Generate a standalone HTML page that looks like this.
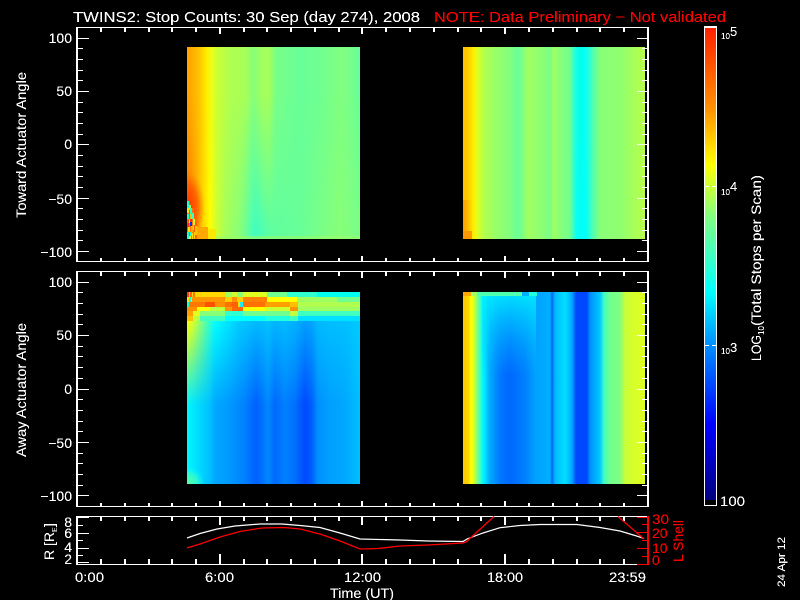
<!DOCTYPE html>
<html><head><meta charset="utf-8"><title>TWINS2 Stop Counts</title>
<style>html,body{margin:0;padding:0;background:#000}svg{display:block}
text{font-family:"Liberation Sans",sans-serif;fill:#fff;font-size:14px}
.r{fill:#f00}</style></head><body>
<svg width="800" height="600" viewBox="0 0 800 600" xmlns="http://www.w3.org/2000/svg">
<defs>
<filter id="al" filterUnits="userSpaceOnUse" x="0" y="0" width="800" height="600" color-interpolation-filters="sRGB"><feComponentTransfer><feFuncA type="linear" slope="2.6" intercept="-0.45"/></feComponentTransfer></filter>
<linearGradient id="cb" x1="0" y1="28" x2="0" y2="500" gradientUnits="userSpaceOnUse">
<stop offset="0" stop-color="#ff2000"/><stop offset=".17" stop-color="#ff9000"/><stop offset=".29" stop-color="#ffff00"/><stop offset=".4" stop-color="#80ff80"/><stop offset=".56" stop-color="#00ffff"/><stop offset=".67" stop-color="#0090ff"/><stop offset=".84" stop-color="#0000ff"/><stop offset="1" stop-color="#000080"/></linearGradient>
<linearGradient id="p1a" x1="0" x2="1000" gradientUnits="userSpaceOnUse"><stop offset=".187" stop-color="#ffa000"/><stop offset=".193" stop-color="#ffb000"/><stop offset=".2" stop-color="#ffc800"/><stop offset=".207" stop-color="#fff000"/><stop offset=".212" stop-color="#e8ff18"/><stop offset=".218" stop-color="#c8ff38"/><stop offset=".23" stop-color="#b0ff50"/><stop offset=".245" stop-color="#a8ff58"/><stop offset=".253" stop-color="#88ff78"/><stop offset=".262" stop-color="#a0ff60"/><stop offset=".268" stop-color="#a8ff58"/><stop offset=".276" stop-color="#78ff88"/><stop offset=".3" stop-color="#68ff98"/><stop offset=".32" stop-color="#70ff90"/><stop offset=".34" stop-color="#80ff80"/><stop offset=".35" stop-color="#78ff88"/><stop offset=".36" stop-color="#68ff98"/></linearGradient>
<linearGradient id="p1b" x1="0" x2="1000" gradientUnits="userSpaceOnUse"><stop offset=".187" stop-color="#ff7000"/><stop offset=".193" stop-color="#ff9000"/><stop offset=".2" stop-color="#ffc000"/><stop offset=".205" stop-color="#ffe000"/><stop offset=".21" stop-color="#ffff00"/><stop offset=".216" stop-color="#d0ff30"/><stop offset=".225" stop-color="#a8ff58"/><stop offset=".24" stop-color="#88ff78"/><stop offset=".255" stop-color="#40ffc0"/><stop offset=".262" stop-color="#50ffb0"/><stop offset=".27" stop-color="#60ffa0"/><stop offset=".3" stop-color="#68ff98"/><stop offset=".32" stop-color="#78ff88"/><stop offset=".34" stop-color="#88ff78"/><stop offset=".36" stop-color="#78ff88"/></linearGradient>
<linearGradient id="p1r" x1="0" x2="1000" gradientUnits="userSpaceOnUse"><stop offset=".463" stop-color="#ffc000"/><stop offset=".467" stop-color="#ffc800"/><stop offset=".47" stop-color="#ffd800"/><stop offset=".474" stop-color="#fff000"/><stop offset=".478" stop-color="#d8ff28"/><stop offset=".485" stop-color="#b0ff50"/><stop offset=".5" stop-color="#90ff70"/><stop offset=".512" stop-color="#80ff80"/><stop offset=".516" stop-color="#68ff98"/><stop offset=".522" stop-color="#78ff88"/><stop offset=".528" stop-color="#a0ff60"/><stop offset=".54" stop-color="#90ff70"/><stop offset=".551" stop-color="#78ff88"/><stop offset=".553" stop-color="#a0ff60"/><stop offset=".56" stop-color="#88ff78"/><stop offset=".57" stop-color="#70ff90"/><stop offset=".575" stop-color="#20ffe0"/><stop offset=".58" stop-color="#00fff0"/><stop offset=".587" stop-color="#10fff0"/><stop offset=".592" stop-color="#48ffb8"/><stop offset=".6" stop-color="#88ff78"/><stop offset=".62" stop-color="#90ff70"/><stop offset=".64" stop-color="#b0ff50"/><stop offset=".645" stop-color="#b8ff48"/></linearGradient>
<linearGradient id="p2b" x1="0" x2="1000" gradientUnits="userSpaceOnUse"><stop offset=".187" stop-color="#00f8ff"/><stop offset=".2" stop-color="#00d8ff"/><stop offset=".21" stop-color="#00c0ff"/><stop offset=".215" stop-color="#00a8ff"/><stop offset=".23" stop-color="#0098ff"/><stop offset=".245" stop-color="#0080ff"/><stop offset=".256" stop-color="#0060ff"/><stop offset=".262" stop-color="#0070ff"/><stop offset=".268" stop-color="#0088ff"/><stop offset=".275" stop-color="#0068ff"/><stop offset=".285" stop-color="#0080ff"/><stop offset=".295" stop-color="#0070ff"/><stop offset=".305" stop-color="#0048ff"/><stop offset=".312" stop-color="#0060ff"/><stop offset=".318" stop-color="#0090ff"/><stop offset=".33" stop-color="#00a0ff"/><stop offset=".345" stop-color="#00a8ff"/><stop offset=".36" stop-color="#00c0ff"/></linearGradient>
<linearGradient id="p2o" x1="0" x2="1000" gradientUnits="userSpaceOnUse"><stop offset=".187" stop-color="#ffff00"/><stop offset=".193" stop-color="#d8ff28"/><stop offset=".2" stop-color="#90ff70"/><stop offset=".208" stop-color="#40ffc0"/><stop offset=".215" stop-color="#00ffff"/><stop offset=".24" stop-color="#00e0ff" stop-opacity=".75"/><stop offset=".36" stop-color="#00d8ff" stop-opacity=".45"/></linearGradient>
<linearGradient id="p2r" x1="0" x2="1000" gradientUnits="userSpaceOnUse"><stop offset=".463" stop-color="#ffc800"/><stop offset=".469" stop-color="#ffd800"/><stop offset=".47" stop-color="#ffff00"/><stop offset=".472" stop-color="#ffff00"/><stop offset=".476" stop-color="#a0ff60"/><stop offset=".48" stop-color="#40ffc0"/><stop offset=".483" stop-color="#00f8ff"/><stop offset=".49" stop-color="#00a8ff"/><stop offset=".5" stop-color="#0078ff"/><stop offset=".51" stop-color="#0068ff"/><stop offset=".525" stop-color="#0080ff"/><stop offset=".535" stop-color="#00a0ff"/><stop offset=".55" stop-color="#00b0ff"/><stop offset=".552" stop-color="#0060ff"/><stop offset=".555" stop-color="#00b8ff"/><stop offset=".565" stop-color="#00e0ff"/><stop offset=".572" stop-color="#00a8ff"/><stop offset=".576" stop-color="#0048ff"/><stop offset=".587" stop-color="#0048ff"/><stop offset=".59" stop-color="#0090ff"/><stop offset=".6" stop-color="#00c8ff"/><stop offset=".604" stop-color="#40ffc0"/><stop offset=".61" stop-color="#70ff90"/><stop offset=".62" stop-color="#80ff80"/><stop offset=".625" stop-color="#c8ff38"/><stop offset=".635" stop-color="#d8ff28"/><stop offset=".645" stop-color="#e0ff20"/></linearGradient>
<linearGradient id="f1" x1="0" y1="47" x2="0" y2="239" gradientUnits="userSpaceOnUse"><stop offset=".25" stop-color="#000"/><stop offset=".95" stop-color="#fff"/></linearGradient>
<mask id="m1" maskUnits="userSpaceOnUse" x="187" y="47" width="173" height="192"><rect x="187" y="47" width="173" height="192" fill="url(#f1)"/></mask>
<linearGradient id="f2" x1="0" y1="321" x2="0" y2="405" gradientUnits="userSpaceOnUse"><stop offset="0" stop-color="#fff"/><stop offset="1" stop-color="#000"/></linearGradient>
<mask id="m2" maskUnits="userSpaceOnUse" x="187" y="321" width="173" height="100"><rect x="187" y="321" width="173" height="100" fill="url(#f2)"/></mask>
<linearGradient id="f4" x1="0" y1="296" x2="0" y2="375" gradientUnits="userSpaceOnUse"><stop offset="0" stop-color="#00f0ff" stop-opacity=".85"/><stop offset="1" stop-color="#00c0ff" stop-opacity="0"/></linearGradient>
<linearGradient id="f5" x1="0" y1="130" x2="0" y2="239" gradientUnits="userSpaceOnUse"><stop offset="0" stop-color="#00ffff" stop-opacity="0"/><stop offset="1" stop-color="#00ffff" stop-opacity=".6"/></linearGradient>
<linearGradient id="f6" x1="0" x2="1000" gradientUnits="userSpaceOnUse"><stop offset=".463" stop-color="#ff9800" stop-opacity=".9"/><stop offset=".472" stop-color="#ffb000" stop-opacity="0"/></linearGradient>
<radialGradient id="red" cx="187" cy="208" r="32" gradientUnits="userSpaceOnUse" gradientTransform="translate(187 208) scale(.55 1.2) translate(-187 -208)"><stop offset="0" stop-color="#ff3000"/><stop offset=".6" stop-color="#ff5000" stop-opacity=".75"/><stop offset="1" stop-color="#ff7000" stop-opacity="0"/></radialGradient>
<radialGradient id="corner" cx="187" cy="484" r="18" gradientUnits="userSpaceOnUse"><stop offset="0" stop-color="#60ffa0"/><stop offset=".6" stop-color="#40ffc0" stop-opacity=".7"/><stop offset="1" stop-color="#00ffff" stop-opacity="0"/></radialGradient>
</defs>

<!-- Panel 1 left -->
<rect x="187" y="47" width="173" height="192" fill="url(#p1a)"/>
<rect x="187" y="47" width="173" height="192" fill="url(#p1b)" mask="url(#m1)"/>
<rect x="187" y="165" width="18" height="74" fill="url(#red)"/>
<g shape-rendering="crispEdges">
<rect x="187" y="236" width="173" height="3" fill="#98ff68" opacity=".6"/>
<rect x="208" y="229" width="8" height="10" fill="#ffe800"/>
<rect x="197" y="227" width="11" height="12" fill="#ffa800"/>
<rect x="187" y="201" width="3" height="38" fill="#ff6000"/>
<rect x="190" y="208" width="4" height="31" fill="#ff7000"/>
<rect x="194" y="222" width="3" height="17" fill="#ff6000"/>
<rect x="187" y="201" width="2" height="7" fill="#20ffd0"/><rect x="189" y="205" width="2" height="5" fill="#a0ff60"/>
<rect x="187" y="208" width="2" height="5" fill="#ffe000"/><rect x="190" y="208" width="2" height="6" fill="#20ffd0"/>
<rect x="187" y="214" width="2" height="5" fill="#20ffd0"/><rect x="190" y="214" width="2" height="5" fill="#ffc000"/><rect x="192" y="213" width="2" height="6" fill="#30ffd0"/>
<rect x="189" y="219" width="2" height="4" fill="#ffe000"/><rect x="190" y="219" width="2" height="4" fill="#ff3000"/><rect x="193" y="219" width="2" height="6" fill="#d0ff30"/>
<rect x="187" y="223" width="2" height="5" fill="#ff3000"/><rect x="190" y="222" width="2" height="4" fill="#0030ff"/><rect x="193" y="225" width="1" height="5" fill="#ffd000"/>
<rect x="188" y="227" width="2" height="5" fill="#ffe000"/><rect x="191" y="226" width="2" height="6" fill="#ffb000"/><rect x="195" y="226" width="2" height="9" fill="#ffc000"/>
<rect x="187" y="232" width="2" height="7" fill="#20ffd0"/><rect x="190" y="232" width="2" height="4" fill="#20ffd0"/><rect x="192" y="233" width="1" height="6" fill="#ffe000"/>
<rect x="189" y="236" width="2" height="3" fill="#ffff00"/><rect x="194" y="232" width="1" height="7" fill="#ffd000"/>
</g>

<!-- Panel 1 right -->
<rect x="463" y="47" width="182" height="192" fill="url(#p1r)"/>
<rect x="463" y="200" width="10" height="39" fill="url(#f6)"/>
<rect x="463" y="231" width="9" height="8" fill="#ff9800" shape-rendering="crispEdges"/>
<rect x="575" y="130" width="13" height="109" fill="url(#f5)"/>

<!-- Panel 2 left -->
<rect x="187" y="321" width="173" height="163" fill="url(#p2b)"/>
<rect x="187" y="321" width="173" height="100" fill="url(#p2o)" mask="url(#m2)"/>
<rect x="187" y="464" width="22" height="20" fill="url(#corner)"/>
<g shape-rendering="crispEdges">
<rect x="187" y="292" width="173" height="5" fill="#00fff0"/>
<rect x="187" y="292" width="38" height="5" fill="#ffd800"/><rect x="225" y="292" width="7" height="5" fill="#a0ff60"/><rect x="232" y="292" width="5" height="5" fill="#d0ff30"/><rect x="237" y="292" width="6" height="5" fill="#90ff70"/><rect x="243" y="292" width="24" height="5" fill="#e0ff20"/><rect x="267" y="292" width="20" height="5" fill="#70ff90"/><rect x="287" y="292" width="30" height="5" fill="#30ffd0"/>
<rect x="187" y="292" width="2" height="5" fill="#ff4000"/><rect x="190" y="292" width="2" height="5" fill="#ff6000"/><rect x="193" y="292" width="2" height="5" fill="#ff7000"/>
<rect x="187" y="297" width="173" height="5" fill="#70ff90"/>
<rect x="187" y="297" width="38" height="5" fill="#ff9800"/><rect x="225" y="297" width="7" height="5" fill="#ffd000"/><rect x="232" y="297" width="5" height="5" fill="#ff9000"/><rect x="237" y="297" width="6" height="5" fill="#ffd000"/><rect x="243" y="297" width="24" height="5" fill="#ff8000"/><rect x="267" y="297" width="30" height="5" fill="#ffff00"/><rect x="297" y="297" width="40" height="5" fill="#a0ff60"/>
<rect x="187" y="297" width="5" height="5" fill="#ffe000"/><rect x="189" y="297" width="2" height="5" fill="#20ffd0"/>
<rect x="187" y="302" width="173" height="5" fill="#b0ff50"/>
<rect x="187" y="302" width="18" height="5" fill="#ff7800"/><rect x="205" y="302" width="10" height="5" fill="#ff5000"/><rect x="215" y="302" width="10" height="5" fill="#ff9000"/><rect x="225" y="302" width="7" height="5" fill="#ff7000"/><rect x="232" y="302" width="6" height="5" fill="#ff6000"/><rect x="238" y="302" width="2" height="5" fill="#ffe000"/><rect x="240" y="302" width="3" height="5" fill="#20e8ff"/><rect x="243" y="302" width="22" height="5" fill="#ff7000"/><rect x="265" y="302" width="25" height="5" fill="#ffa000"/><rect x="290" y="302" width="8" height="5" fill="#ffc000"/>
<rect x="187" y="302" width="2" height="5" fill="#20ffd0"/>
<rect x="187" y="307" width="173" height="4" fill="#a0ff60"/>
<rect x="187" y="307" width="10" height="4" fill="#ff9000"/><rect x="197" y="307" width="13" height="4" fill="#ffff00"/><rect x="210" y="307" width="15" height="4" fill="#c0ff40"/><rect x="225" y="307" width="7" height="4" fill="#ff9800"/><rect x="232" y="307" width="11" height="4" fill="#ff6800"/><rect x="243" y="307" width="22" height="4" fill="#ffff00"/><rect x="265" y="307" width="25" height="4" fill="#d0ff30"/><rect x="290" y="307" width="8" height="4" fill="#ff9000"/>
<rect x="187" y="311" width="173" height="5" fill="#40ffc0"/>
<rect x="187" y="311" width="6" height="5" fill="#ffa000"/><rect x="193" y="311" width="7" height="5" fill="#e0ff20"/><rect x="200" y="311" width="25" height="5" fill="#88ff78"/><rect x="225" y="311" width="18" height="5" fill="#30ffd0"/><rect x="243" y="311" width="47" height="5" fill="#70ff90"/><rect x="290" y="311" width="8" height="5" fill="#c0ff40"/>
<rect x="187" y="316" width="173" height="5" fill="#00e0ff"/>
<rect x="187" y="316" width="6" height="5" fill="#ffc000"/><rect x="193" y="316" width="7" height="5" fill="#c0ff40"/><rect x="200" y="316" width="25" height="5" fill="#40ffc0"/><rect x="225" y="316" width="40" height="5" fill="#00ffff"/><rect x="265" y="316" width="25" height="5" fill="#20ffe0"/><rect x="290" y="316" width="8" height="5" fill="#40ffc0"/>
</g>

<!-- Panel 2 right -->
<rect x="463" y="292" width="182" height="192" fill="url(#p2r)"/>
<rect x="482" y="296" width="54" height="79" fill="url(#f4)"/>
<g shape-rendering="crispEdges">
<rect x="477" y="292" width="45" height="4" fill="#50ffb0"/>
<rect x="471" y="292" width="6" height="4" fill="#a0ff60"/>
<rect x="463" y="292" width="8" height="4" fill="#ffa800"/>
<rect x="522" y="292" width="7" height="4" fill="#00b0ff"/><rect x="529" y="292" width="8" height="4" fill="#20ffe0"/>
</g>

<!-- Colour bar -->
<rect x="705" y="28" width="11" height="472" fill="url(#cb)"/>
<g fill="#fff" shape-rendering="crispEdges">
<rect x="704" y="26" width="13" height="2"/><rect x="704" y="26" width="1" height="480"/><rect x="716" y="26" width="1" height="480"/><rect x="704" y="505" width="13" height="1"/>
<rect x="705" y="186" width="4" height="1"/><rect x="712" y="186" width="4" height="1"/>
<rect x="705" y="345" width="4" height="1"/><rect x="712" y="345" width="4" height="1"/>
</g>

<!-- Frames -->
<g fill="#fff" shape-rendering="crispEdges">
<rect x="76" y="27" width="2" height="235"/><rect x="647" y="27" width="2" height="235"/><rect x="76" y="27" width="573" height="1"/><rect x="76" y="261" width="573" height="1"/>
<rect x="76" y="271" width="2" height="236"/><rect x="647" y="271" width="2" height="236"/><rect x="76" y="271" width="573" height="1"/><rect x="76" y="506" width="573" height="1"/>
<rect x="76" y="516" width="2" height="49"/><rect x="76" y="516" width="573" height="1"/><rect x="76" y="564" width="573" height="1"/>
</g>
<rect x="647" y="516" width="2" height="49" fill="#f00" shape-rendering="crispEdges"/>

<g stroke="#fff" stroke-width="1" fill="none" shape-rendering="crispEdges">
<path d="M77 38.5H89M77 91.5H89M77 144.5H89M77 198.5H89M77 251.5H89M648 38.5H637M648 91.5H637M648 144.5H637M648 198.5H637M648 251.5H637"/>
<path d="M77 48.5H83M77 59.5H83M77 70.5H83M77 80.5H83M77 102.5H83M77 112.5H83M77 123.5H83M77 134.5H83M77 155.5H83M77 166.5H83M77 176.5H83M77 187.5H83M77 208.5H83M77 219.5H83M77 230.5H83M77 240.5H83"/>
<path d="M648 48.5H642M648 59.5H642M648 70.5H642M648 80.5H642M648 102.5H642M648 112.5H642M648 123.5H642M648 134.5H642M648 155.5H642M648 166.5H642M648 176.5H642M648 187.5H642M648 208.5H642M648 219.5H642M648 230.5H642M648 240.5H642"/>
<path d="M77 282.5H89M77 335.5H89M77 389.5H89M77 442.5H89M77 495.5H89M648 282.5H637M648 335.5H637M648 389.5H637M648 442.5H637M648 495.5H637"/>
<path d="M77 292.5H83M77 303.5H83M77 314.5H83M77 324.5H83M77 346.5H83M77 356.5H83M77 367.5H83M77 378.5H83M77 399.5H83M77 410.5H83M77 421.5H83M77 431.5H83M77 453.5H83M77 463.5H83M77 474.5H83M77 485.5H83"/>
<path d="M648 292.5H642M648 303.5H642M648 314.5H642M648 324.5H642M648 346.5H642M648 356.5H642M648 367.5H642M648 378.5H642M648 399.5H642M648 410.5H642M648 421.5H642M648 431.5H642M648 453.5H642M648 463.5H642M648 474.5H642M648 485.5H642"/>
</g>
<g stroke="#fff" stroke-width="2" fill="none" shape-rendering="crispEdges">
<path d="M101 27v5M125 27v5M149 27v5M172 27v5M196 27v5M244 27v5M267 27v5M291 27v5M315 27v5M339 27v5M386 27v5M410 27v5M434 27v5M458 27v5M481 27v5M529 27v5M553 27v5M577 27v5M600 27v5M624 27v5M220 27v7M362 27v7M505 27v7"/>
<path d="M101 262v-4M125 262v-4M149 262v-4M172 262v-4M196 262v-4M244 262v-4M267 262v-4M291 262v-4M315 262v-4M339 262v-4M386 262v-4M410 262v-4M434 262v-4M458 262v-4M481 262v-4M529 262v-4M553 262v-4M577 262v-4M600 262v-4M624 262v-4M220 262v-6M362 262v-6M505 262v-6"/>
<path d="M101 271v5M125 271v5M149 271v5M172 271v5M196 271v5M244 271v5M267 271v5M291 271v5M315 271v5M339 271v5M386 271v5M410 271v5M434 271v5M458 271v5M481 271v5M529 271v5M553 271v5M577 271v5M600 271v5M624 271v5M220 271v7M362 271v7M505 271v7"/>
<path d="M101 507v-4M125 507v-4M149 507v-4M172 507v-4M196 507v-4M244 507v-4M267 507v-4M291 507v-4M315 507v-4M339 507v-4M386 507v-4M410 507v-4M434 507v-4M458 507v-4M481 507v-4M529 507v-4M553 507v-4M577 507v-4M600 507v-4M624 507v-4M220 507v-6M362 507v-6M505 507v-6"/>
<path d="M101 517v4M125 517v4M149 517v4M172 517v4M196 517v4M244 517v4M267 517v4M291 517v4M315 517v4M339 517v4M386 517v4M410 517v4M434 517v4M458 517v4M481 517v4M529 517v4M553 517v4M577 517v4M600 517v4M624 517v4M220 517v8M362 517v8M505 517v8"/>
<path d="M101 564v-5M125 564v-5M149 564v-5M172 564v-5M196 564v-5M244 564v-5M267 564v-5M291 564v-5M315 564v-5M339 564v-5M386 564v-5M410 564v-5M434 564v-5M458 564v-5M481 564v-5M529 564v-5M553 564v-5M577 564v-5M600 564v-5M624 564v-5M220 564v-10M362 564v-10M505 564v-10"/>
</g>
<g stroke-width="1" fill="none" shape-rendering="crispEdges">
<path stroke="#fff" d="M77 517.5H89M77 533.5H89M77 548.5H89M77 562.5H89M77 525.5H83M77 540.5H83M77 555.5H83"/>
<path stroke="#f00" d="M648 517.5H637M648 532.5H637M648 548.5H637M648 564.5H637M648 524.5H642M648 540.5H642M648 556.5H642"/>
</g>
<!-- Curves -->
<polyline fill="none" stroke="#fff" stroke-width="1.2" points="187,538 200,533.5 217,529 235,526 260,524 282,524 300,525.5 320,527.5 340,533 360,539 400,540 428,541 463,541.5 467,539 483,533 500,527.7 520,525.5 540,524.5 577,524.5 600,527.5 620,531 635,535.5 644,538.5"/>
<polyline fill="none" stroke="#f00" stroke-width="1.3" points="187,548 200,544 220,537 240,531.5 262,528 284,527.5 300,529 320,534 340,541 360,549 378,548.5 400,546 428,545 463,543 466,542 494,516.5"/>
<polyline fill="none" stroke="#f00" stroke-width="1.3" points="618,516.5 644,539"/>

<!-- Text -->
<g filter="url(#al)">
<text x="73" y="22" style="font-size:15px" textLength="347" lengthAdjust="spacingAndGlyphs">TWINS2: Stop Counts: 30 Sep (day 274), 2008</text>
<text class="r" x="434" y="22" style="font-size:15px" textLength="292" lengthAdjust="spacingAndGlyphs">NOTE: Data Preliminary − Not validated</text>

<g text-anchor="end">
<text x="72" y="43">100</text><text x="72" y="96">50</text><text x="72" y="149">0</text><text x="72" y="204">−50</text><text x="72" y="257">−100</text>
<text x="72" y="287">100</text><text x="72" y="340">50</text><text x="72" y="394">0</text><text x="72" y="448">−50</text><text x="72" y="501">−100</text>
</g>
<text transform="translate(26 218) rotate(-90)" textLength="146" lengthAdjust="spacingAndGlyphs">Toward Actuator Angle</text>
<text transform="translate(26 457) rotate(-90)" textLength="134" lengthAdjust="spacingAndGlyphs">Away Actuator Angle</text>

<text transform="translate(54 560) rotate(-90)" textLength="28" lengthAdjust="spacingAndGlyphs">R [R</text>
<text transform="translate(57 532) rotate(-90)" style="font-size:7px">E</text>
<text transform="translate(54 527) rotate(-90)">]</text>
<text x="72" y="527" text-anchor="end">8</text><text x="72" y="538" text-anchor="end">6</text><text x="72" y="552" text-anchor="end">4</text><text x="72" y="564" text-anchor="end">2</text>

<text x="75" y="582" textLength="29" lengthAdjust="spacingAndGlyphs">0:00</text>
<text x="205" y="582" textLength="29" lengthAdjust="spacingAndGlyphs">6:00</text>
<text x="344" y="582" textLength="37" lengthAdjust="spacingAndGlyphs">12:00</text>
<text x="487" y="582" textLength="36" lengthAdjust="spacingAndGlyphs">18:00</text>
<text x="609" y="582" textLength="37" lengthAdjust="spacingAndGlyphs">23:59</text>
<text x="330" y="598" textLength="64" lengthAdjust="spacingAndGlyphs">Time (UT)</text>

<text class="r" x="652" y="524" textLength="17" lengthAdjust="spacingAndGlyphs">30</text>
<text class="r" x="652" y="538">20</text>
<text class="r" x="652" y="553">10</text>
<text class="r" x="652" y="565">0</text>
<text class="r" transform="translate(683 562) rotate(-90)" textLength="42" lengthAdjust="spacingAndGlyphs">L Shell</text>

<text transform="translate(785 587) rotate(-90)" style="font-size:11px" textLength="50" lengthAdjust="spacingAndGlyphs">24 Apr 12</text>

<text x="721" y="39" style="font-size:8px" textLength="9" lengthAdjust="spacingAndGlyphs">10</text><text x="730" y="36" style="font-size:13px">5</text>
<text x="721" y="195" style="font-size:8px" textLength="9" lengthAdjust="spacingAndGlyphs">10</text><text x="730" y="191" style="font-size:13px">4</text>
<text x="721" y="354" style="font-size:8px" textLength="9" lengthAdjust="spacingAndGlyphs">10</text><text x="730" y="352" style="font-size:13px">3</text>
<text x="720" y="506" textLength="25" lengthAdjust="spacingAndGlyphs">100</text>

<text transform="translate(761 361) rotate(-90)" textLength="26" lengthAdjust="spacingAndGlyphs">LOG</text>
<text transform="translate(764 335) rotate(-90)" style="font-size:8px" textLength="9" lengthAdjust="spacingAndGlyphs">10</text>
<text transform="translate(761 326) rotate(-90)" textLength="151" lengthAdjust="spacingAndGlyphs">(Total Stops per Scan)</text>
</g>
</svg>
</body></html>
